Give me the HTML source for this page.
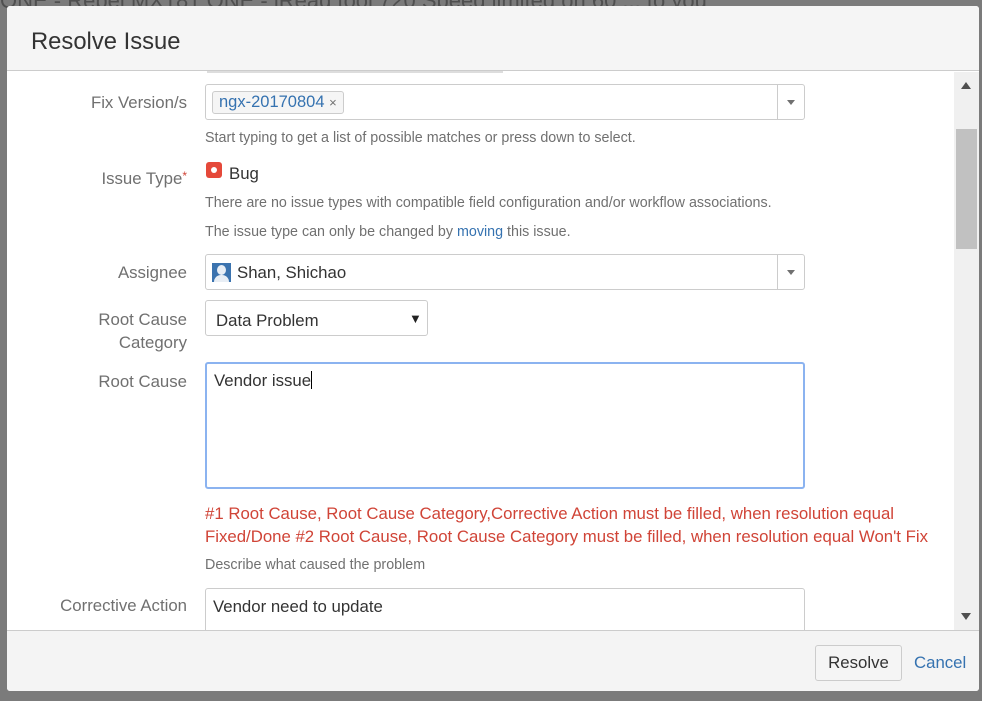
<!DOCTYPE html>
<html><head><style>
*{box-sizing:border-box;margin:0;padding:0}
body{width:982px;height:701px;background:#7b7b7b;font-family:"Liberation Sans",Arial,sans-serif;position:relative;overflow:hidden}
.a{position:absolute}
.dlg{left:7px;top:6px;width:972px;height:685px;background:#fff;border-radius:3px;overflow:hidden}
.hd{left:0;top:0;width:972px;height:65px;background:#f5f5f5;border-bottom:1px solid #ccc}
.ft{left:0;top:624px;width:972px;height:61px;background:#f4f4f4;border-top:1px solid #ccc}
.lbl{color:#707070;font-size:16.8px;text-align:right;width:180px;left:0}
.desc{color:#707070;font-size:14.3px;left:198px}
.box{border:1px solid #ccc;border-radius:3px;background:#fff}
.txt{color:#333;font-size:16.8px}
.err{color:#d04437;font-size:16.8px;left:198px;line-height:23px}
.dd{position:absolute;right:0;top:0;width:27px;height:100%;border-left:1px solid #ccc}
.dd:after{content:"";position:absolute;left:9px;top:15px;border-left:4px solid transparent;border-right:4px solid transparent;border-top:5px solid #707070}
</style></head><body>
<div class="a" style="left:0;top:-12px;color:#333;font-size:22px;white-space:nowrap;opacity:.6">ONE - Rebel MX181 ONE - iRead tool 720 Speed limited on 60 ... to you</div>
<div class="a dlg">
 <div class="a hd"><div class="a" style="left:24px;top:22px;font-size:23.8px;color:#333">Resolve Issue</div></div>
 <div class="a" style="left:200px;top:65px;width:296px;height:2px;background:#ddd"></div>
 <div class="a lbl" style="top:87px">Fix Version/s</div>
 <div class="a box" style="left:198px;top:78px;width:600px;height:36px"><div class="a" style="left:6px;top:6px;height:23px;padding:0 6px;border:1px solid #ccc;border-radius:3px;background:#f5f5f5;font-size:16.5px;color:#3572b0;line-height:21px">ngx-20170804 <span style="color:#707070;font-size:13px">×</span></div><div class="dd"></div></div>
 <div class="a desc" style="top:124px">Start typing to get a list of possible matches or press down to select.</div>
 <div class="a lbl" style="top:163px">Issue Type<span style="color:#d04437;font-size:12px;vertical-align:top">*</span></div>
 <div class="a" style="left:199px;top:156px;width:16px;height:16px;background:#e5493a;border-radius:3px"><div class="a" style="left:5px;top:5px;width:6px;height:6px;background:#fff;border-radius:50%"></div></div>
 <div class="a txt" style="left:222px;top:158px">Bug</div>
 <div class="a desc" style="top:189px">There are no issue types with compatible field configuration and/or workflow associations.</div>
 <div class="a desc" style="top:218px">The issue type can only be changed by <span style="color:#3572b0">moving</span> this issue.</div>
 <div class="a lbl" style="top:257px">Assignee</div>
 <div class="a box" style="left:198px;top:248px;width:600px;height:36px"><div class="a" style="left:6px;top:8px;width:19px;height:19px;background:#3b73af;overflow:hidden"><div class="a" style="left:5px;top:2px;width:9px;height:10px;border-radius:50%;background:#e8eef5"></div><div class="a" style="left:2px;top:12px;width:15px;height:10px;border-radius:7px 7px 0 0;background:#e8eef5"></div></div><div class="a txt" style="left:31px;top:8px">Shan, Shichao</div><div class="dd"></div></div>
 <div class="a lbl" style="top:302px;line-height:23px">Root Cause<br>Category</div>
 <div class="a box" style="left:198px;top:294px;width:223px;height:36px"><div class="a txt" style="left:10px;top:10px">Data Problem</div><div class="a" style="left:203px;top:10px;font-size:13px;color:#222">▼</div></div>
 <div class="a lbl" style="top:366px">Root Cause</div>
 <div class="a" style="left:198px;top:356px;width:600px;height:127px;border:2px solid #8bb3f0;border-radius:3px"><div class="a txt" style="left:7px;top:7px">Vendor issue<span style="display:inline-block;width:1px;height:18px;background:#000;vertical-align:-3px"></span></div></div>
 <div class="a err" style="top:496px;width:760px">#1 Root Cause, Root Cause Category,Corrective Action must be filled, when resolution equal<br>Fixed/Done #2 Root Cause, Root Cause Category must be filled, when resolution equal Won't Fix</div>
 <div class="a desc" style="top:551px">Describe what caused the problem</div>
 <div class="a lbl" style="top:590px">Corrective Action</div>
 <div class="a box" style="left:198px;top:582px;width:600px;height:60px"><div class="a txt" style="left:7px;top:8px">Vendor need to update</div></div>
 <div class="a" style="left:947px;top:66px;width:25px;height:558px;background:#f0f0f0"><div class="a" style="left:7px;top:10px;border-left:5px solid transparent;border-right:5px solid transparent;border-bottom:7px solid #505050"></div><div class="a" style="left:2px;top:57px;width:21px;height:120px;background:#c1c1c1"></div><div class="a" style="left:7px;top:541px;border-left:5px solid transparent;border-right:5px solid transparent;border-top:7px solid #505050"></div></div>
 <div class="a ft">
  <div class="a" style="left:808px;top:14px;width:87px;height:36px;border:1px solid #ccc;border-radius:3px;background:#f5f5f5;font-size:16.8px;color:#333;text-align:center;line-height:34px">Resolve</div>
  <div class="a" style="left:907px;top:22px;font-size:16.8px;color:#3572b0">Cancel</div>
 </div>
</div>
</body></html>
